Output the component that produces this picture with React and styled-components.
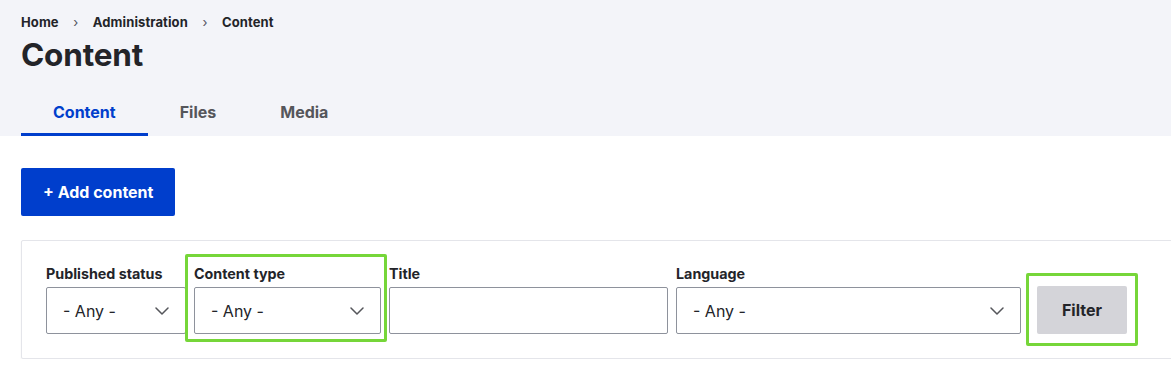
import React from "react";
import styled, { createGlobalStyle } from "styled-components";

const Global = createGlobalStyle`
  html, body { margin: 0; padding: 0; background: #fff; overflow: hidden; }
  body { font-family: Inter, "Noto Sans", "Liberation Sans", sans-serif; color: #232429; }
  * { box-sizing: border-box; }
`;

const Header = styled.header`
  background: #f3f4f9;
  padding: 13px 21px 0;
`;

const Breadcrumb = styled.nav`
  display: flex;
  align-items: center;
  font-size: 13px;
  line-height: 18px;
  font-weight: 700;
  color: #232429;
  letter-spacing: 0.1px;
`;

const Sep = styled.span`
  color: #545560;
  font-weight: 400;
  margin: 0 14.5px;
  font-size: 13px;
`;

const Title = styled.h1`
  margin: 4px 0 0;
  font-size: 31.5px;
  line-height: 40px;
  font-weight: 700;
  color: #232429;
  letter-spacing: -0.2px;
`;

const Tabs = styled.div`
  display: flex;
  margin-top: 13px;
`;

const Tab = styled.a`
  display: flex;
  align-items: center;
  height: 48px;
  padding: 0 32px;
  font-size: 16px;
  font-weight: 700;
  color: ${(p) => (p.$active ? "#003ecc" : "#55565b")};
  box-shadow: ${(p) => (p.$active ? "inset 0 -3px 0 #003ecc" : "none")};
  text-decoration: none;
`;

const Main = styled.main`
  padding: 32px 0 0 21px;
`;

const PrimaryButton = styled.button`
  height: 48px;
  padding: 0 22px;
  border: 0;
  border-radius: 2px;
  background: #003ecc;
  color: #fff;
  font-family: inherit;
  font-size: 16px;
  font-weight: 700;
`;

const Panel = styled.div`
  margin-top: 24px;
  width: 1180px;
  border: 1px solid #e4e5ea;
  border-radius: 2px;
  box-shadow: 0 1px 2px rgba(0, 0, 0, 0.06);
  padding: 24px;
  background: #fff;
`;

const Row = styled.div`
  display: flex;
  align-items: flex-end;
  gap: 8px;
`;

const Item = styled.div`
  position: relative;
  display: flex;
  flex-direction: column;
  width: ${(p) => p.$w}px;
  ${(p) =>
    p.$hl &&
    `&::after {
      content: "";
      position: absolute;
      top: -11px; left: -9px; right: -6px; bottom: -8px;
      border: 3px solid #76d639;
      border-radius: 2px;
      pointer-events: none;
    }`}
`;

const Label = styled.label`
  font-size: 14.3px;
  line-height: 18px;
  font-weight: 700;
  margin-bottom: 4px;
  color: #232429;
`;

const SelectBox = styled.div`
  height: 47px;
  border: 1px solid #8e929c;
  border-radius: 2px;
  display: flex;
  align-items: center;
  justify-content: space-between;
  padding: 0 16px;
  font-size: 16px;
  color: #232429;
  background: #fff;
`;

const TextInput = styled.input`
  height: 47px;
  border: 1px solid #8e929c;
  border-radius: 2px;
  width: 100%;
  background: #fff;
`;

const Actions = styled.div`
  position: relative;
  margin-left: 8px;
  &::after {
    content: "";
    position: absolute;
    top: -13px; left: -11px; right: -11px; bottom: -12px;
    border: 3px solid #76d639;
    border-radius: 2px;
    pointer-events: none;
  }
`;

const FilterButton = styled.button`
  width: 90px;
  height: 48px;
  border: 0;
  border-radius: 2px;
  background: #d4d4d9;
  color: #232429;
  font-family: inherit;
  font-size: 16px;
  font-weight: 700;
`;

const Chevron = () => (
  <svg width="14" height="8" viewBox="0 0 14 8" fill="none">
    <path d="M1 1l6 6 6-6" stroke="#55565b" strokeWidth="1.5" strokeLinecap="round" strokeLinejoin="round" />
  </svg>
);

const Select = ({ label, w, hl }) => (
  <Item $w={w} $hl={hl}>
    <Label>{label}</Label>
    <SelectBox>
      <span>- Any -</span>
      <Chevron />
    </SelectBox>
  </Item>
);

export default function App() {
  return (
    <>
      <Global />
      <Header>
        <Breadcrumb>
          <span>Home</span>
          <Sep>›</Sep>
          <span>Administration</span>
          <Sep>›</Sep>
          <span>Content</span>
        </Breadcrumb>
        <Title>Content</Title>
        <Tabs>
          <Tab $active>Content</Tab>
          <Tab>Files</Tab>
          <Tab>Media</Tab>
        </Tabs>
      </Header>
      <Main>
        <PrimaryButton>+ Add content</PrimaryButton>
        <Panel>
          <Row>
            <Select label="Published status" w={140} />
            <Select label="Content type" w={187} hl />
            <Item $w={279}>
              <Label>Title</Label>
              <TextInput />
            </Item>
            <Select label="Language" w={345} />
            <Actions>
              <FilterButton>Filter</FilterButton>
            </Actions>
          </Row>
        </Panel>
      </Main>
    </>
  );
}
